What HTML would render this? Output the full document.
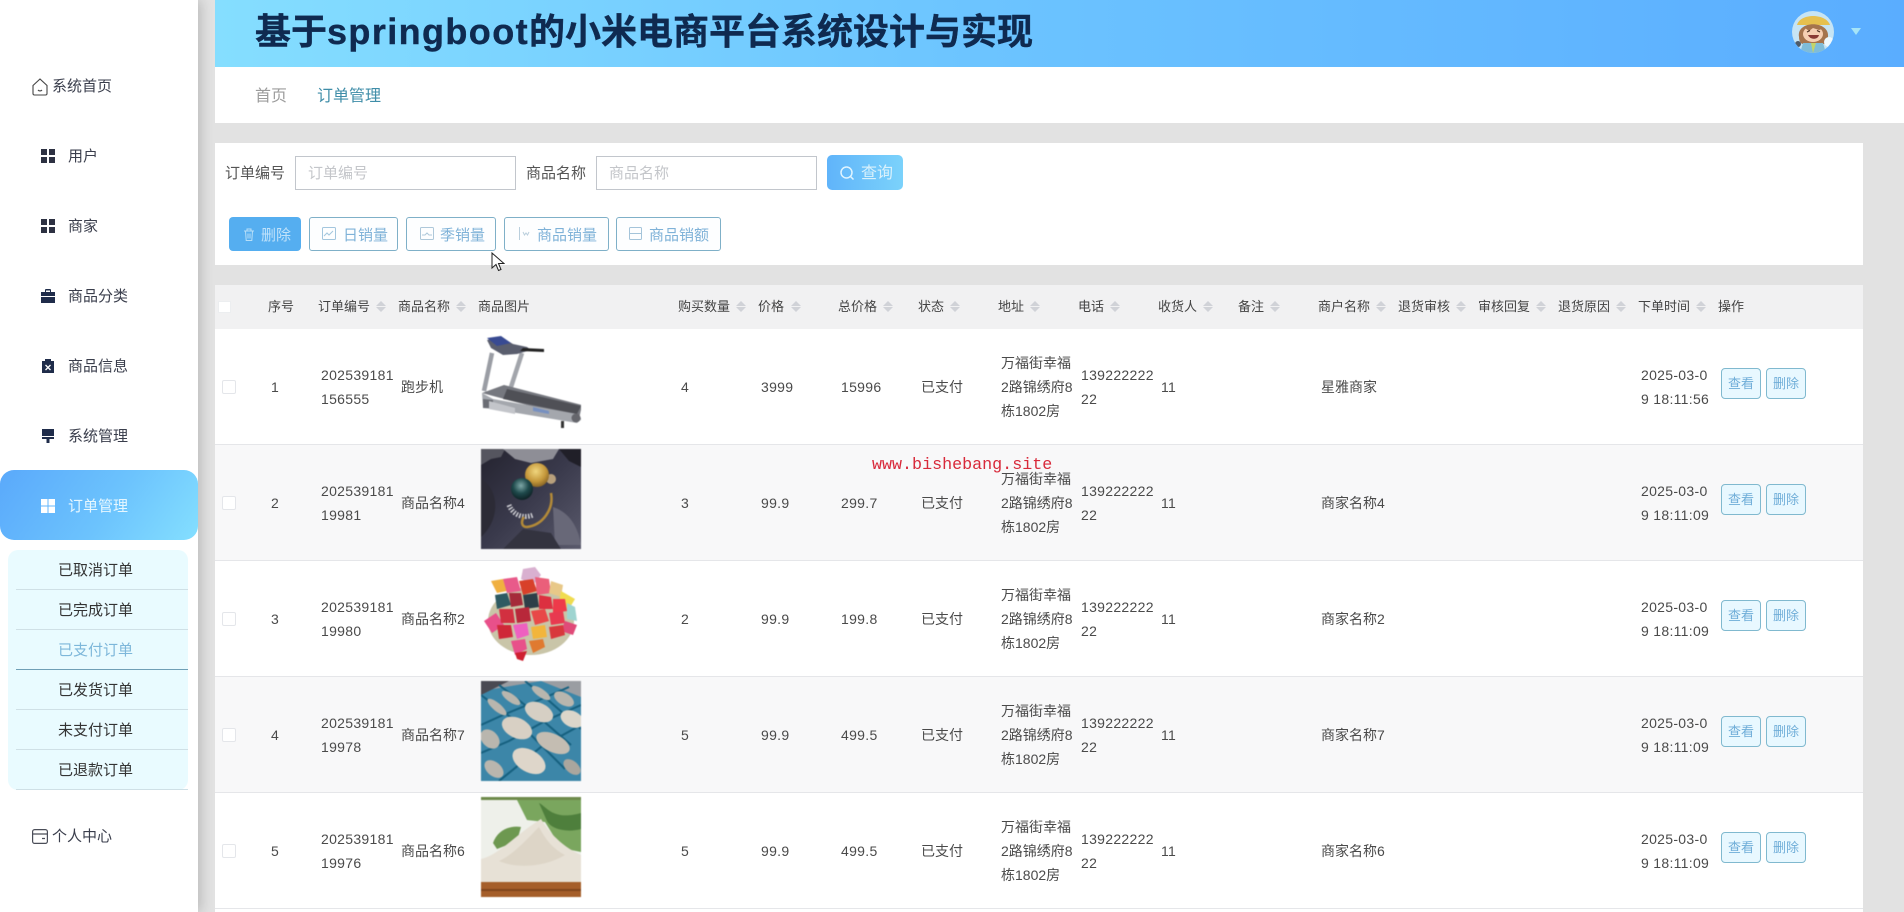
<!DOCTYPE html>
<html lang="zh">
<head>
<meta charset="utf-8">
<title>订单管理</title>
<style>
html,body{margin:0;padding:0;width:1904px;height:912px;overflow:hidden;background:#e2e2e2}
body{position:relative;font-family:"Liberation Sans","Noto Sans CJK SC",sans-serif;font-size:14px;color:#444}
.a{position:absolute}
.t{position:absolute;white-space:nowrap;line-height:24px}
#side{left:0;top:0;width:198px;height:912px;background:#fff;box-shadow:3px 0 12px rgba(0,0,0,.18)}
.m{font-size:15px;color:#3a3e4c;left:68px}
.sub{font-size:15px;color:#333;left:58px}
.ln{position:absolute;left:16px;width:172px;height:1px;background:#cfe0e6}
.g{position:absolute;left:41px;width:14px;height:14px}
#hd{left:215px;top:0;width:1689px;height:67px;background:linear-gradient(90deg,#85deff 0%,#6cc4ff 45%,#5aadff 100%)}
#title{left:255px;top:7px;font-size:36px;font-weight:700;color:#0f2a50;line-height:50px;-webkit-text-stroke:.4px #0f2a50}
#title span{letter-spacing:1.4px}
#nav{left:215px;top:67px;width:1689px;height:56px;background:#fff}
#card{left:215px;top:143px;width:1648px;height:122px;background:#fff}
.lab{font-size:15px;color:#555}
.inp{position:absolute;top:156px;height:32px;border:1px solid #c2c6cc;background:#fff}
.ph{font-size:15px;color:#c4c6ca}
.btn{position:absolute;top:217px;height:32px;border:1px solid #7fb0c8;border-radius:3px;background:#fdfeff}
.bt{font-size:15px;color:#7fb2d8;top:224px}
#thead{left:215px;top:285px;width:1648px;height:44px;background:#f1f1f2}
.th{font-size:13px;color:#444;top:295px}
.s{position:absolute;top:301px;width:10px;height:11px}
.s:before,.s:after{content:"";position:absolute;left:0;border-left:5px solid transparent;border-right:5px solid transparent}
.s:before{top:0;border-bottom:5px solid #d0d2d7}
.s:after{bottom:0;border-top:5px solid #d0d2d7}
.r{position:absolute;left:215px;width:1648px;height:115px;background:#fff;border-bottom:1px solid #e5e6e9}
.r.e{background:#f8f8f9}
.r .t{font-size:14px;color:#4a4a4a}
.r .n{letter-spacing:.3px}
.cb{position:absolute;left:7px;top:51px;width:12px;height:12px;border:1px solid #e4e6ea;border-radius:2px;background:#fff}
.img{position:absolute;left:266px;top:4px;width:100px;height:100px;display:block;filter:blur(.45px)}
.o{position:absolute;top:39px;width:38px;height:29px;border:1px solid #80b9cf;border-radius:4px;background:#e8f8ff;font-size:13px;color:#6fadd8;text-align:center;line-height:29px}
</style>
</head>
<body>

<div class="a" id="side"></div>

<svg class="a" style="left:32px;top:78px" width="16" height="18" viewBox="0 0 16 18" fill="none" stroke="#444" stroke-width="1.1"><path d="M1 7.500L8 1l7 6.500V15.500a1.500 1.500 0 0 1-1.500 1.500h-11A1.500 1.500 0 0 1 1 15.500z"/><path d="M6 12c1 1.200 3 1.200 4 0"/></svg>
<div class="t" style="left:52px;top:75px;font-size:15px;color:#3a3e4c">系统首页</div>

<svg class="g" style="top:149px" viewBox="0 0 14 14" fill="#2d3142"><rect width="6" height="6"/><rect x="8" width="6" height="6"/><rect y="8" width="6" height="6"/><rect x="8" y="8" width="6" height="6"/></svg>
<div class="t m" style="top:145px">用户</div>

<svg class="g" style="top:219px" viewBox="0 0 14 14" fill="#2d3142"><rect width="6" height="6"/><rect x="8" width="6" height="6"/><rect y="8" width="6" height="6"/><rect x="8" y="8" width="6" height="6"/></svg>
<div class="t m" style="top:215px">商家</div>

<svg class="g" style="top:289px" viewBox="0 0 14 14" fill="#1f2c4a"><path d="M5 0h4a1 1 0 0 1 1 1v2h4v4H0V3h4V1a1 1 0 0 1 1-1zm0 1.500V3h4V1.500z"/><rect y="8" width="14" height="6"/></svg>
<div class="t m" style="top:285px">商品分类</div>

<svg class="g" style="top:359px" viewBox="0 0 14 14"><path fill="#1f2c4a" d="M1 2h3V0h6v2h3v12H1z"/><path stroke="#fff" stroke-width="1.300" d="M4.500 6l5 5M9.500 6l-5 5"/></svg>
<div class="t m" style="top:355px">商品信息</div>

<svg class="g" style="top:429px" viewBox="0 0 14 14" fill="#1f2c4a"><rect x="1" y="0" width="12" height="7"/><rect x="1" y="8" width="12" height="2"/><rect x="5.500" y="10" width="3" height="4"/></svg>
<div class="t m" style="top:425px">系统管理</div>

<div class="a" style="left:0;top:470px;width:198px;height:70px;border-radius:14px;background:linear-gradient(125deg,#5aa9fb 0%,#6cc3fd 55%,#84dfff 100%)"></div>
<svg class="g" style="top:499px" viewBox="0 0 14 14" fill="#fff"><rect width="6.500" height="6.500"/><rect x="7.500" width="6.500" height="6.500"/><rect y="7.500" width="6.500" height="6.500"/><rect x="7.500" y="7.500" width="6.500" height="6.500"/></svg>
<div class="t m" style="top:495px;color:#e6f7ff">订单管理</div>

<div class="a" style="left:8px;top:550px;width:180px;height:240px;background:#e9fbff;border-radius:10px"></div>
<div class="t sub" style="top:559px">已取消订单</div><div class="ln" style="top:589px"></div>
<div class="t sub" style="top:599px">已完成订单</div><div class="ln" style="top:629px"></div>
<div class="t sub" style="top:639px;color:#7db7da">已支付订单</div><div class="ln" style="top:669px;background:#6f9fb6"></div>
<div class="t sub" style="top:679px">已发货订单</div><div class="ln" style="top:709px"></div>
<div class="t sub" style="top:719px">未支付订单</div><div class="ln" style="top:749px"></div>
<div class="t sub" style="top:759px">已退款订单</div><div class="ln" style="top:789px"></div>

<svg class="a" style="left:32px;top:829px" width="16" height="15" viewBox="0 0 16 15" fill="none" stroke="#4a4d58" stroke-width="1.200"><rect x=".6" y=".6" width="14.800" height="13.800" rx="2"/><path d="M.6 5h14.800M10 9.500h3"/></svg>
<div class="t" style="left:52px;top:825px;font-size:15px;color:#3a3e4c">个人中心</div>

<div class="a" id="nav"></div>
<div class="a" id="hd"></div>
<div class="t" id="title">基于<span>springboot</span>的小米电商平台系统设计与实现</div>

<svg class="a" style="left:1792px;top:11px" width="42" height="42" viewBox="0 0 42 42">
<defs><clipPath id="av"><circle cx="21" cy="21" r="21"/></clipPath></defs>
<g clip-path="url(#av)">
<rect width="42" height="42" fill="#c6e4f4"/>
<path d="M5 14C8 2 34 2 38 14z" fill="#e6c04e"/>
<path d="M7 26C4 9 38 9 36 26c0 5-3 7-4 7H11c-2 0-4-3-4-7z" fill="#a5744d"/>
<ellipse cx="21" cy="23" rx="10" ry="8" fill="#f6cfb2"/>
<path d="M13 17c3-4 15-4 17 1l-3 1-6-2-4 3z" fill="#a5744d"/>
<path d="M15 21l3-1.500M28 21l-3-1.500" stroke="#4a2e20" stroke-width="1.200" fill="none"/>
<path d="M16 24h11c-1 5-9 5-11 0z" fill="#8a3a34"/>
<path d="M11 32h20l3 10H8z" fill="#7fbcd8"/>
<path d="M19 32l2 10 3-10z" fill="#c4d468"/>
<circle cx="6" cy="33" r="3" fill="#4d5a68"/>
<circle cx="37" cy="31" r="5" fill="#eef8fd"/>
</g>
</svg>
<svg class="a" style="left:1851px;top:28px" width="10" height="7" viewBox="0 0 10 7"><path d="M0 0h10L5 7z" fill="#a6e4f7"/></svg>

<div class="t" style="left:255px;top:85px;font-size:16px;color:#9c9c9c">首页</div>
<div class="t" style="left:317px;top:85px;font-size:16px;color:#3f8da8">订单管理</div>

<div class="a" id="card"></div>
<div class="t lab" style="left:225px;top:162px">订单编号</div>
<div class="inp" style="left:295px;width:219px"></div>
<div class="t ph" style="left:308px;top:162px">订单编号</div>
<div class="t lab" style="left:526px;top:162px">商品名称</div>
<div class="inp" style="left:596px;width:219px"></div>
<div class="t ph" style="left:609px;top:162px">商品名称</div>

<div class="a" style="left:827px;top:155px;width:76px;height:35px;border-radius:5px;background:linear-gradient(90deg,#60b4fa,#7bd2fb)"></div>
<svg class="a" style="left:839px;top:165px" width="16" height="16" viewBox="0 0 16 16" fill="none" stroke="#dff4ff" stroke-width="1.500"><circle cx="7.500" cy="7.500" r="5.500"/><path d="M11.500 11.500l3 3"/></svg>
<div class="t" style="left:861px;top:162px;font-size:16px;color:#d9f1fb">查询</div>

<div class="a" style="left:229px;top:217px;width:72px;height:34px;border-radius:4px;background:#55aef0"></div>
<svg class="a" style="left:243px;top:228px" width="12" height="13" viewBox="0 0 12 13" fill="none" stroke="#b8dff8" stroke-width="1"><path d="M1 3h10M4 3V1h4v2M2.500 3l.7 9.500h5.600L9.500 3M5 5.500v5M7 5.500v5"/></svg>
<div class="t" style="left:261px;top:224px;font-size:15px;color:#c0e2fa">删除</div>

<div class="btn" style="left:309px;width:87px"></div>
<svg class="a" style="left:322px;top:227px" width="14" height="13" viewBox="0 0 14 13" fill="none" stroke="#a3c6de"><rect x=".5" y=".5" width="13" height="12" rx="1"/><path d="M2 9l3-3 2 2 4-4"/></svg>
<div class="t bt" style="left:343px">日销量</div>

<div class="btn" style="left:406px;width:88px"></div>
<svg class="a" style="left:420px;top:227px" width="14" height="13" viewBox="0 0 14 13" fill="none" stroke="#aec8da"><rect x=".5" y=".5" width="13" height="12" rx="1"/><path d="M2 8h3l2-2 2 2h3"/></svg>
<div class="t bt" style="left:440px">季销量</div>

<div class="btn" style="left:504px;width:103px"></div>
<svg class="a" style="left:519px;top:227px" width="11" height="13" viewBox="0 0 11 13" fill="none" stroke="#bacfdd"><path d="M.5 0v13M4 5l1.500 3 1.500-2 1.500 2L10 5"/></svg>
<div class="t bt" style="left:537px">商品销量</div>

<div class="btn" style="left:616px;width:103px"></div>
<svg class="a" style="left:629px;top:227px" width="13" height="13" viewBox="0 0 13 13" fill="none" stroke="#a4c4da"><rect x=".5" y=".5" width="12" height="12" rx="1"/><path d="M.5 6.500h12"/></svg>
<div class="t bt" style="left:649px">商品销额</div>

<div class="a" id="thead"></div>
<div class="a" style="left:218px;top:301px;width:13px;height:12px;background:#fff;border:1px solid #eceef0;box-sizing:border-box"></div>
<div class="t th" style="left:268px">序号</div>
<div class="t th" style="left:318px">订单编号</div><span class="s" style="left:376px"></span>
<div class="t th" style="left:398px">商品名称</div><span class="s" style="left:456px"></span>
<div class="t th" style="left:478px">商品图片</div>
<div class="t th" style="left:678px">购买数量</div><span class="s" style="left:736px"></span>
<div class="t th" style="left:758px">价格</div><span class="s" style="left:791px"></span>
<div class="t th" style="left:838px">总价格</div><span class="s" style="left:883px"></span>
<div class="t th" style="left:918px">状态</div><span class="s" style="left:950px"></span>
<div class="t th" style="left:998px">地址</div><span class="s" style="left:1030px"></span>
<div class="t th" style="left:1078px">电话</div><span class="s" style="left:1110px"></span>
<div class="t th" style="left:1158px">收货人</div><span class="s" style="left:1203px"></span>
<div class="t th" style="left:1238px">备注</div><span class="s" style="left:1270px"></span>
<div class="t th" style="left:1318px">商户名称</div><span class="s" style="left:1376px"></span>
<div class="t th" style="left:1398px">退货审核</div><span class="s" style="left:1456px"></span>
<div class="t th" style="left:1478px">审核回复</div><span class="s" style="left:1536px"></span>
<div class="t th" style="left:1558px">退货原因</div><span class="s" style="left:1616px"></span>
<div class="t th" style="left:1638px">下单时间</div><span class="s" style="left:1696px"></span>
<div class="t th" style="left:1718px">操作</div>

<div class="r" style="top:329px">
<span class="cb"></span>
<div class="t" style="left:56px;top:46px">1</div>
<div class="t n" style="left:106px;top:34px">202539181<br>156555</div>
<div class="t" style="left:186px;top:46px">跑步机</div>
<svg class="img" viewBox="0 0 100 100">
<path d="M11 20L3 58" stroke="#9a9da4" stroke-width="4.500" fill="none"/>
<path d="M41 20L30 54" stroke="#a2a5ab" stroke-width="4.500" fill="none"/>
<path d="M6 7l14-3 12 7 14 3 4 3-14 4-14 1-12-7z" fill="#5a5e6e"/>
<path d="M6 5l14-2 10 7-14 3z" fill="#384a92"/>
<path d="M42 15l21 1v3l-24-1z" fill="#222"/>
<path d="M1 60l22-8 78 20-3 14z" fill="#76787f"/>
<path d="M26 56l74 17-4 8-74-15z" fill="#4f5056"/>
<path d="M1 60l1 15 10 1 84 14 5-4-5-5-84-15z" fill="#a4a7ad"/>
<path d="M2 66l10 1v8H2z" fill="#6b6d74"/>
<path d="M8 68l26 7v6L8 76z" fill="#c3c5ca"/>
<path d="M52 74l16 4v3l-16-3z" fill="#7790c0"/>
<circle cx="95" cy="85" r="4.500" fill="#65666c"/>
<rect x="80" y="88" width="3" height="7" fill="#333"/>
</svg>
<div class="t n" style="left:466px;top:46px">4</div>
<div class="t n" style="left:546px;top:46px">3999</div>
<div class="t n" style="left:626px;top:46px">15996</div>
<div class="t" style="left:706px;top:46px">已支付</div>
<div class="t" style="left:786px;top:22px">万福街幸福<br>2路锦绣府8<br>栋1802房</div>
<div class="t n" style="left:866px;top:34px">139222222<br>22</div>
<div class="t n" style="left:946px;top:46px">11</div>
<div class="t" style="left:1106px;top:46px">星雅商家</div>
<div class="t n" style="left:1426px;top:34px">2025-03-0<br>9 18:11:56</div>
<div class="o" style="left:1506px">查看</div><div class="o" style="left:1551px">删除</div>
</div>

<div class="r e" style="top:445px">
<span class="cb"></span>
<div class="t" style="left:56px;top:46px">2</div>
<div class="t n" style="left:106px;top:34px">202539181<br>19981</div>
<div class="t" style="left:186px;top:46px">商品名称4</div>
<svg class="img" viewBox="0 0 100 100">
<defs>
<radialGradient id="gp" cx=".45" cy=".35" r=".7"><stop offset="0" stop-color="#f0d67e"/><stop offset=".6" stop-color="#c4973a"/><stop offset="1" stop-color="#7b5a22"/></radialGradient>
<radialGradient id="bp" cx=".45" cy=".35" r=".7"><stop offset="0" stop-color="#7fa8a8"/><stop offset=".5" stop-color="#1f4a4c"/><stop offset="1" stop-color="#0b1a1e"/></radialGradient>
<linearGradient id="rb" x1="0" y1="0" x2="1" y2="1"><stop offset="0" stop-color="#24232f"/><stop offset=".5" stop-color="#3a3a4c"/><stop offset="1" stop-color="#5a5a6c"/></linearGradient>
</defs>
<rect width="100" height="100" fill="url(#rb)"/>
<path d="M0 0h24l-4 8-10 2-10 6z" fill="#55555f"/>
<path d="M22 0h56l-6 10-22 4-16-4z" fill="#8e8e96"/>
<path d="M78 0h22v18l-12-6z" fill="#201f28"/>
<path d="M0 30c18 10 20 40 0 58z" fill="#2c2b36"/>
<path d="M72 58c12 4 24 14 28 38H74z" fill="#686878"/>
<path d="M22 100l20-20 28 4 10 16z" fill="#33333f"/>
<path d="M28 56c4 10 14 14 24 10" stroke="#cfcfd4" stroke-width="5" fill="none" stroke-dasharray="1.500 1.500"/>
<path d="M70 44c3 16-8 32-24 34-6 0-6-6-3-10" stroke="#b38a38" stroke-width="2.500" fill="none"/>
<circle cx="70" cy="30" r="5" fill="#b8a07c"/>
<circle cx="56" cy="26" r="12" fill="url(#gp)"/>
<circle cx="41" cy="40" r="11" fill="url(#bp)"/>
</svg>
<div class="t n" style="left:466px;top:46px">3</div>
<div class="t n" style="left:546px;top:46px">99.9</div>
<div class="t n" style="left:626px;top:46px">299.7</div>
<div class="t" style="left:706px;top:46px">已支付</div>
<div class="t" style="left:786px;top:22px">万福街幸福<br>2路锦绣府8<br>栋1802房</div>
<div class="t n" style="left:866px;top:34px">139222222<br>22</div>
<div class="t n" style="left:946px;top:46px">11</div>
<div class="t" style="left:1106px;top:46px">商家名称4</div>
<div class="t n" style="left:1426px;top:34px">2025-03-0<br>9 18:11:09</div>
<div class="o" style="left:1506px">查看</div><div class="o" style="left:1551px">删除</div>
</div>

<div class="r" style="top:561px">
<span class="cb"></span>
<div class="t" style="left:56px;top:46px">3</div>
<div class="t n" style="left:106px;top:34px">202539181<br>19980</div>
<div class="t" style="left:186px;top:46px">商品名称2</div>
<svg class="img" viewBox="0 0 100 100">
<rect width="100" height="100" fill="#fff"/>
<ellipse cx="50" cy="56" rx="43" ry="34" fill="#c9c5a8"/>
<path d="M42 4l12-2 6 8-8 10-12-6z" fill="#d9b0d0"/>
<path d="M10 16l12-2 4 12-10 2z" fill="#f0b040"/>
<path d="M22 14l14-2 4 14-14 2z" fill="#e85a8a"/>
<path d="M38 16l14-2 4 12-14 4z" fill="#d8402a"/>
<path d="M54 12l14 2 2 14-14 2z" fill="#ea5f7a"/>
<path d="M70 16l12 4-2 12-12-4z" fill="#e8c888"/>
<path d="M80 26l14 8-6 10-10-6z" fill="#f0dc50"/>
<path d="M14 30l12-2 4 12-14 4z" fill="#2e5a62"/>
<path d="M28 28l12 0 2 12-12 2z" fill="#a52a3a"/>
<path d="M42 30l14-2 2 14-14 2z" fill="#2e3f48"/>
<path d="M58 30l12 2 2 12-14 0z" fill="#dc3040"/>
<path d="M72 34l12 0 2 12-14 2z" fill="#ee3a4a"/>
<path d="M86 38l8 4 2 14-10-2z" fill="#9ed4d0"/>
<path d="M3 56l12-8 8 12-12 8z" fill="#e8508a"/>
<path d="M18 44l14 0 2 14-14 0z" fill="#d23040"/>
<path d="M34 44l14-2 2 14-14 2z" fill="#b8283a"/>
<path d="M50 46l14-2 4 12-14 4z" fill="#e84848"/>
<path d="M68 48l14-2 2 12-14 2z" fill="#e83a50"/>
<path d="M84 56l12 4-4 10-12-4z" fill="#e04a78"/>
<path d="M16 60l14 0 2 12-14 2z" fill="#cf2838"/>
<path d="M32 60l14-2 2 12-12 4z" fill="#ee60c0"/>
<path d="M50 62l14-2 2 12-14 2z" fill="#f2b53c"/>
<path d="M68 62l14-2 2 10-14 4z" fill="#d8383c"/>
<path d="M30 76l14-2 2 10-12 6z" fill="#e8508a"/>
<path d="M48 76l14-2 2 8-12 6z" fill="#e07a30"/>
<path d="M34 88l12-2-4 10-6-2z" fill="#cf2030"/>
</svg>
<div class="t n" style="left:466px;top:46px">2</div>
<div class="t n" style="left:546px;top:46px">99.9</div>
<div class="t n" style="left:626px;top:46px">199.8</div>
<div class="t" style="left:706px;top:46px">已支付</div>
<div class="t" style="left:786px;top:22px">万福街幸福<br>2路锦绣府8<br>栋1802房</div>
<div class="t n" style="left:866px;top:34px">139222222<br>22</div>
<div class="t n" style="left:946px;top:46px">11</div>
<div class="t" style="left:1106px;top:46px">商家名称2</div>
<div class="t n" style="left:1426px;top:34px">2025-03-0<br>9 18:11:09</div>
<div class="o" style="left:1506px">查看</div><div class="o" style="left:1551px">删除</div>
</div>

<div class="r e" style="top:677px">
<span class="cb"></span>
<div class="t" style="left:56px;top:46px">4</div>
<div class="t n" style="left:106px;top:34px">202539181<br>19978</div>
<div class="t" style="left:186px;top:46px">商品名称7</div>
<svg class="img" viewBox="0 0 100 100">
<rect width="100" height="100" fill="#3c86a8"/>
<path d="M0 0h100v16L60 0 0 10z" fill="#9a9da2"/>
<path d="M0 0h28L0 14z" fill="#4a4a52"/>
<g stroke="#16607f" stroke-width="2" fill="none"><path d="M0 14l40 30 44 44M18 4l26 20 46 40M44 0l22 18 34 30"/><path d="M0 44l22-10 34-14 32-14M0 72l28-12 36-20 36-16M18 100l42-34 40-22"/></g>
<g fill="#b9b6ae">
<ellipse cx="30" cy="17" rx="11" ry="4" transform="rotate(35 30 17)"/>
<ellipse cx="60" cy="12" rx="11" ry="4" transform="rotate(35 60 12)"/>
<ellipse cx="83" cy="18" rx="11" ry="6" transform="rotate(30 83 18)"/>
<ellipse cx="16" cy="26" rx="12" ry="4" transform="rotate(40 16 26)"/>
<ellipse cx="58" cy="31" rx="15" ry="9" transform="rotate(25 58 31)" fill="#d6cfc4"/>
<ellipse cx="91" cy="38" rx="12" ry="8" transform="rotate(25 91 38)" fill="#dcd6ca"/>
<ellipse cx="36" cy="47" rx="16" ry="10" transform="rotate(25 36 47)" fill="#d8d0c4"/>
<ellipse cx="9" cy="58" rx="11" ry="8" transform="rotate(45 9 58)"/>
<ellipse cx="72" cy="62" rx="18" ry="9" transform="rotate(25 72 62)" fill="#c4bdb2"/>
<ellipse cx="48" cy="80" rx="18" ry="11" transform="rotate(30 48 80)" fill="#ded6ca"/>
<ellipse cx="13" cy="88" rx="11" ry="7" transform="rotate(40 13 88)"/>
<ellipse cx="91" cy="86" rx="10" ry="6" transform="rotate(40 91 86)" fill="#aaa69e"/>
</g>
</svg>
<div class="t n" style="left:466px;top:46px">5</div>
<div class="t n" style="left:546px;top:46px">99.9</div>
<div class="t n" style="left:626px;top:46px">499.5</div>
<div class="t" style="left:706px;top:46px">已支付</div>
<div class="t" style="left:786px;top:22px">万福街幸福<br>2路锦绣府8<br>栋1802房</div>
<div class="t n" style="left:866px;top:34px">139222222<br>22</div>
<div class="t n" style="left:946px;top:46px">11</div>
<div class="t" style="left:1106px;top:46px">商家名称7</div>
<div class="t n" style="left:1426px;top:34px">2025-03-0<br>9 18:11:09</div>
<div class="o" style="left:1506px">查看</div><div class="o" style="left:1551px">删除</div>
</div>

<div class="r" style="top:793px">
<span class="cb"></span>
<div class="t" style="left:56px;top:46px">5</div>
<div class="t n" style="left:106px;top:34px">202539181<br>19976</div>
<div class="t" style="left:186px;top:46px">商品名称6</div>
<svg class="img" viewBox="0 0 100 100">
<rect width="100" height="100" fill="#eef0ea"/>
<path d="M0 0h100v3H0z" fill="#6d8a4a"/>
<path d="M36 3l64 0v52l-20-4-16-26-18-2z" fill="#7aa65e"/>
<path d="M58 6c8 4 14 18 42 10v16c-14 4-30 0-34-8z" fill="#4e7f3c"/>
<path d="M12 46c4-12 16-18 28-16l-4 14-20 8z" fill="#6d9850"/>
<path d="M0 62c18-4 34-24 60-40 6 10 18 26 40 36v28H0z" fill="#e7e1d6"/>
<path d="M18 64c14-6 28-22 40-34 6 12 14 22 26 28-20 12-48 14-66 6z" fill="#ddd5c7"/>
<path d="M0 85h100v15H0z" fill="#a55e2a"/>
<path d="M0 92h100v2H0z" fill="#7f441c"/>
</svg>
<div class="t n" style="left:466px;top:46px">5</div>
<div class="t n" style="left:546px;top:46px">99.9</div>
<div class="t n" style="left:626px;top:46px">499.5</div>
<div class="t" style="left:706px;top:46px">已支付</div>
<div class="t" style="left:786px;top:22px">万福街幸福<br>2路锦绣府8<br>栋1802房</div>
<div class="t n" style="left:866px;top:34px">139222222<br>22</div>
<div class="t n" style="left:946px;top:46px">11</div>
<div class="t" style="left:1106px;top:46px">商家名称6</div>
<div class="t n" style="left:1426px;top:34px">2025-03-0<br>9 18:11:09</div>
<div class="o" style="left:1506px">查看</div><div class="o" style="left:1551px">删除</div>
</div>

<div class="a" style="left:215px;top:909px;width:1648px;height:3px;background:#fff"></div>

<div class="t" style="left:872px;top:454px;font-family:'Liberation Mono',monospace;font-size:16.700px;color:#d8293a">www.bishebang.site</div>

<svg class="a" style="left:491px;top:252px" width="14" height="20" viewBox="0 0 14 20"><path d="M1 1v15l4-3.500 2.500 6 2.500-1-2.500-6H13z" fill="#fff" stroke="#222" stroke-width="1"/></svg>

</body>
</html>
